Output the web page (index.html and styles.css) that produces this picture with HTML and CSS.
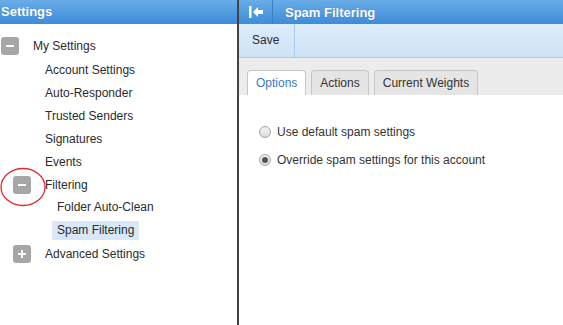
FILE: index.html
```html
<!DOCTYPE html>
<html lang="en">
<head>
    <meta charset="UTF-8">
    <title>Spam Filtering</title>
    <link rel="stylesheet" href="styles.css">
</head>
<body>
    <div class="sidebar">
        <div class="bar-head">Settings</div>
        <div class="tree">
            <div class="row lvl0"><span class="toggle minus"></span><span class="label">My Settings</span></div>
            <div class="row lvl1"><span class="label">Account Settings</span></div>
            <div class="row lvl1"><span class="label">Auto-Responder</span></div>
            <div class="row lvl1"><span class="label">Trusted Senders</span></div>
            <div class="row lvl1"><span class="label">Signatures</span></div>
            <div class="row lvl1"><span class="label">Events</span></div>
            <div class="row lvl1 has-toggle"><span class="toggle minus"></span><span class="label">Filtering</span></div>
            <div class="row lvl2"><span class="label">Folder Auto-Clean</span></div>
            <div class="row lvl2"><span class="label selected">Spam Filtering</span></div>
            <div class="row lvl1 has-toggle"><span class="toggle plus"></span><span class="label">Advanced Settings</span></div>
        </div>
        <!-- annotation ring around the Filtering toggle -->
        <svg class="ring" width="48" height="42" viewBox="0 0 48 42">
            <ellipse cx="23" cy="20" rx="22" ry="18.5" fill="none" stroke="#e8262a" stroke-width="1.3"/>
        </svg>
    </div>

    <div class="main">
        <div class="bar-head main-head">
            <span class="collapse">
                <svg width="14" height="12" viewBox="0 0 14 12">
                    <rect x="0" y="0" width="2.5" height="12" fill="#fff"/>
                    <path d="M4 6 L9 1 L9 4 L14 4 L14 8 L9 8 L9 11 Z" fill="#fff"/>
                </svg>
            </span>
            <span class="title">Spam Filtering</span>
        </div>
        <div class="toolbar">
            <span class="tool">Save</span>
        </div>
        <div class="tabs">
            <span class="tab active">Options</span>
            <span class="tab">Actions</span>
            <span class="tab">Current Weights</span>
        </div>
        <div class="content">
            <label class="opt"><input type="radio" name="spam"> Use default spam settings</label>
            <label class="opt"><input type="radio" name="spam" checked> Override spam settings for this account</label>
        </div>
    </div>
</body>
</html>
```

FILE: styles.css
```css
body {
    margin: 0;
    height: 325px;
    display: flex;
    font-family: "Liberation Sans", Arial, sans-serif;
    font-size: 12px;
    color: #2b2b2b;
    overflow: hidden;
}

.sidebar {
    position: relative;
    width: 237px;
    border-right: 2px solid #434343;
    background: #fff;
}

.bar-head {
    height: 24px;
    line-height: 23px;
    background: linear-gradient(#68ade8, #3e8bd8);
    color: #fff;
    font-size: 13px;
    font-weight: bold;
    text-shadow: 0 0 1px rgba(0, 0, 0, 0.25);
    padding-left: 1px;
}

.tree {
    padding-top: 10px;
}

.row {
    display: flex;
    align-items: center;
    height: 23px;
}

.lvl0 { padding-left: 1px; }
.lvl1 { padding-left: 45px; }
.lvl1.has-toggle { padding-left: 13px; }
.lvl2 { padding-left: 52px; }

.lvl0:first-child { height: 24px; }

.toggle {
    position: relative;
    width: 18px;
    height: 18px;
    margin-right: 14px;
    border-radius: 3px;
    background: #a6a6a6;
}

.toggle::before,
.plus::after {
    content: "";
    position: absolute;
    left: 5px;
    top: 8px;
    width: 8px;
    height: 2px;
    background: #fff;
}

.plus::after {
    left: 8px;
    top: 5px;
    width: 2px;
    height: 8px;
}

.lvl2 .label {
    padding: 0 5px;
    line-height: 19px;
}

.label.selected {
    background: #d8e8f9;
}

.ring {
    position: absolute;
    left: 0;
    top: 167px;
}

.main {
    flex: 1;
    display: flex;
    flex-direction: column;
}

.main-head {
    display: flex;
    align-items: center;
    padding-left: 0;
}

.collapse {
    width: 34px;
    height: 24px;
    display: flex;
    align-items: center;
    justify-content: center;
    border-right: 1px solid #3a7fc4;
    box-sizing: border-box;
}

.collapse svg {
    margin-left: 1px;
}

.title {
    padding-left: 12px;
}

.toolbar {
    height: 33px;
    display: flex;
    background: linear-gradient(#dcecfb, #cfe3f6);
    border-bottom: 1px solid #a9cdef;
}

.tool {
    line-height: 33px;
    padding: 0 15px 0 13px;
    border-right: 1px solid #a9cdef;
}

.tabs {
    height: 37px;
    display: flex;
    align-items: flex-end;
    gap: 5px;
    padding-left: 8px;
    background: #ececec;
}

.tab {
    height: 24px;
    line-height: 24px;
    padding: 0 8px;
    border: 1px solid #c6c6c6;
    border-bottom: none;
    border-radius: 4px 4px 0 0;
    background: #e5e5e5;
    color: #333;
}

.tab.active {
    background: #fff;
    color: #3a7ac6;
}

.content {
    flex: 1;
    padding: 23px 0 0 18px;
}

.opt {
    display: flex;
    align-items: center;
    height: 28px;
    color: #333;
}

.opt input {
    appearance: none;
    width: 12px;
    height: 12px;
    margin: 0 6px 0 2px;
    border: 1px solid #a4a4a4;
    border-radius: 50%;
    background: linear-gradient(#f4f4f4, #dcdcdc);
    position: relative;
}

.opt input:checked::after {
    content: "";
    position: absolute;
    left: 2px;
    top: 2px;
    width: 6px;
    height: 6px;
    border-radius: 50%;
    background: #555;
}
```
